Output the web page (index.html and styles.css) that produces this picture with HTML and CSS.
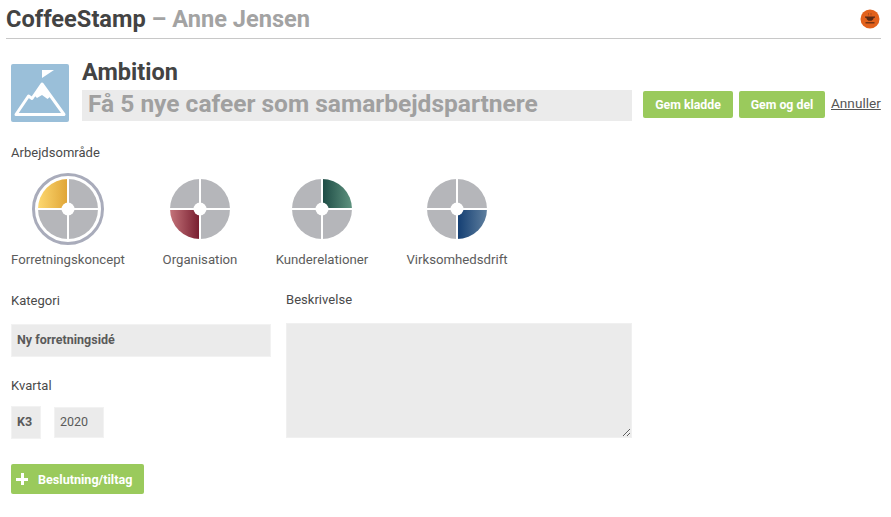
FILE: index.html
```html
<!DOCTYPE html>
<html lang="en">
<head>
  <meta charset="UTF-8" />
  <title>CoffeeStamp</title>
  <link rel="stylesheet" href="styles.css">
</head>
<body>
  <header class="topbar">
    <h1 class="brand">CoffeeStamp <span class="brand-user">– Anne Jensen</span></h1>
    <svg class="coffee-badge" width="20" height="20" viewBox="0 0 20 20">
      <circle cx="10" cy="10" r="9.5" fill="#e2611c"/>
      <path d="M8.500 4v2.500M11 4v2.500" stroke="#a04a1e" stroke-width="0.8" fill="none"/>
      <path d="M5 7.500h10v1.200h-1.200a4 4 0 0 1-2.300 3h-3a4 4 0 0 1-2.300-3H5z" fill="#5a2a16"/>
      <path d="M5.500 13.200h9v1.200h-9z" fill="#5a2a16"/>
    </svg>
  </header>

  <main class="container">
    <section class="goal">
      <svg class="goal-icon" width="58" height="58" viewBox="0 0 58 58">
        <rect width="58" height="58" rx="2" fill="#9abfd9"/>
        <path d="M31 6h12l-12 8z" fill="#fff"/>
        <path d="M5 50.500 17.500 32l3.500 2.500L31 20l22 30.500z" fill="none" stroke="#fff" stroke-width="3" stroke-linejoin="round"/>
        <path d="M31 19l-8 12 3 3 5-3 5.500 4 3.500-3z" fill="#fff"/>
      </svg>
      <div class="goal-body">
        <h2 class="goal-type">Ambition</h2>
        <div class="goal-row">
          <div class="goal-title">Få 5 nye cafeer som samarbejdspartnere</div>
          <button class="btn btn-save">Gem kladde</button>
          <button class="btn btn-share">Gem og del</button>
          <a class="cancel" href="#">Annuller</a>
        </div>
      </div>
    </section>

    <div class="field-label area-label">Arbejdsområde</div>
    <div class="areas">
      <div class="area">
        <svg class="wheel" width="72" height="72" viewBox="0 0 72 72">
          <defs><linearGradient id="yellow"><stop offset="0" stop-color="#fdd870"/><stop offset="1" stop-color="#dfa436"/></linearGradient></defs>
          <circle cx="36" cy="36" r="34.500" fill="none" stroke="#a9acbb" stroke-width="3"/>
          <path class="quarter" d="M36 36V6A30 30 0 0 1 66 36z"/>
          <path class="quarter" d="M36 36H66A30 30 0 0 1 36 66z"/>
          <path class="quarter" d="M36 36V66A30 30 0 0 1 6 36z"/>
          <path d="M36 36H6A30 30 0 0 1 36 6z" fill="url(#yellow)"/>
          <path class="cross" d="M36 5V67M5 36H67"/>
          <circle cx="36" cy="36" r="6.500" fill="#fff"/>
        </svg>
        <span class="area-name">Forretningskoncept</span>
      </div>
      <div class="area">
        <svg class="wheel" width="72" height="72" viewBox="0 0 72 72">
          <defs><linearGradient id="red"><stop offset="0" stop-color="#c4747a"/><stop offset="1" stop-color="#761c2e"/></linearGradient></defs>
          <path class="quarter" d="M36 36V6A30 30 0 0 1 66 36z"/>
          <path class="quarter" d="M36 36H66A30 30 0 0 1 36 66z"/>
          <path class="quarter" d="M36 36H6A30 30 0 0 1 36 6z"/>
          <path d="M36 36V66A30 30 0 0 1 6 36z" fill="url(#red)"/>
          <path class="cross" d="M36 5V67M5 36H67"/>
          <circle cx="36" cy="36" r="6.500" fill="#fff"/>
        </svg>
        <span class="area-name">Organisation</span>
      </div>
      <div class="area">
        <svg class="wheel" width="72" height="72" viewBox="0 0 72 72">
          <defs><linearGradient id="green"><stop offset="0" stop-color="#1c4a44"/><stop offset="1" stop-color="#5f937f"/></linearGradient></defs>
          <path class="quarter" d="M36 36H66A30 30 0 0 1 36 66z"/>
          <path class="quarter" d="M36 36V66A30 30 0 0 1 6 36z"/>
          <path class="quarter" d="M36 36H6A30 30 0 0 1 36 6z"/>
          <path d="M36 36V6A30 30 0 0 1 66 36z" fill="url(#green)"/>
          <path class="cross" d="M36 5V67M5 36H67"/>
          <circle cx="36" cy="36" r="6.500" fill="#fff"/>
        </svg>
        <span class="area-name">Kunderelationer</span>
      </div>
      <div class="area">
        <svg class="wheel" width="72" height="72" viewBox="0 0 72 72">
          <defs><linearGradient id="blue"><stop offset="0" stop-color="#123d72"/><stop offset="1" stop-color="#5f7f9e"/></linearGradient></defs>
          <path class="quarter" d="M36 36V6A30 30 0 0 1 66 36z"/>
          <path class="quarter" d="M36 36V66A30 30 0 0 1 6 36z"/>
          <path class="quarter" d="M36 36H6A30 30 0 0 1 36 6z"/>
          <path d="M36 36H66A30 30 0 0 1 36 66z" fill="url(#blue)"/>
          <path class="cross" d="M36 5V67M5 36H67"/>
          <circle cx="36" cy="36" r="6.500" fill="#fff"/>
        </svg>
        <span class="area-name">Virksomhedsdrift</span>
      </div>
    </div>

    <div class="details">
      <div class="details-left">
        <div class="field-label">Kategori</div>
        <div class="field field-category">Ny forretningsidé</div>
        <div class="field-label quarter-label">Kvartal</div>
        <div class="quarter-row">
          <div class="field field-quarter">K3</div>
          <div class="field field-year">2020</div>
        </div>
      </div>
      <div class="details-right">
        <div class="field-label">Beskrivelse</div>
        <textarea class="description"></textarea>
      </div>
    </div>

    <button class="btn btn-add"><span class="plus"></span>Beslutning/tiltag</button>
  </main>
</body>
</html>
```

FILE: styles.css
```css
* { box-sizing: border-box; }
body {
  margin: 0;
  font-family: Roboto, 'Liberation Sans', sans-serif;
  background-color: #fff;
  color: #4a4a4a;
}

.topbar {
  display: flex;
  justify-content: space-between;
  align-items: center;
  height: 39px;
  margin: 0 10px 0 6px;
  padding-right: 1px;
  border-bottom: 1px solid #c8c8c8;
}

.brand {
  margin: 0;
  font-size: 23.6px;
  font-weight: 700;
  line-height: 42px;
  color: #434343;
}

.brand-user { color: #a3a3a3; }

.container { padding: 21px 10px 0 11px; }

.goal {
  display: flex;
  gap: 13px;
}

.goal-icon { margin-top: 4px; flex: none; }

.goal-body { flex: 1; }

.goal-type {
  margin: 0 0 6px;
  font-size: 23.5px;
  font-weight: 700;
  line-height: 24px;
  color: #434343;
}

.goal-row {
  display: flex;
  align-items: flex-start;
}

.goal-title {
  width: 550px;
  height: 31px;
  padding-left: 6px;
  background: #ebebeb;
  font-size: 24.5px;
  font-weight: 700;
  line-height: 28px;
  color: #a0a0a0;
  white-space: nowrap;
  overflow: hidden;
}

.btn {
  border: none;
  border-radius: 2px;
  background: #9aca5c;
  color: #fff;
  font-family: inherit;
  font-size: 12.3px;
  font-weight: 700;
  cursor: pointer;
}

.btn-save, .btn-share { height: 27px; margin-top: 1px; }
.btn-save { width: 90px; margin-left: 11px; }
.btn-share { width: 86px; margin-left: 6px; }

.cancel {
  margin: 5px 0 0 6px;
  font-size: 13.6px;
  line-height: 16px;
  color: #555;
}

.field-label {
  font-size: 13px;
  line-height: 18px;
  letter-spacing: 0.03px;
  color: #4a4a4a;
}

.area-label { margin-top: 22px; }

.areas {
  display: grid;
  grid-template-columns: 114px 74px 94px 100px;
  column-gap: 38px;
  margin-top: 11px;
}

.area {
  display: flex;
  flex-direction: column;
  align-items: center;
  gap: 6px;
}

.wheel { display: block; }
.quarter { fill: #b5b6ba; }
.cross { stroke: #fff; stroke-width: 2; fill: none; }

.area-name {
  font-size: 13.2px;
  line-height: 18px;
  color: #5c5c5c;
  white-space: nowrap;
}

.details {
  display: grid;
  grid-template-columns: 260px 346px;
  column-gap: 15px;
  margin-top: 22px;
}

.details-left { padding-top: 1px; }

.field {
  background: #ebebeb;
  border: 1px solid #f2f2f2;
  font-size: 12.5px;
  color: #5a5a5a;
}

.field-category {
  height: 33px;
  margin-top: 14px;
  padding-left: 5px;
  font-weight: 700;
  line-height: 30px;
}

.quarter-label { margin-top: 20px; }

.quarter-row {
  display: flex;
  align-items: center;
  gap: 13px;
  margin-top: 11px;
}

.field-quarter {
  width: 30px;
  height: 33px;
  padding-left: 5px;
  font-weight: 700;
  line-height: 30px;
}

.field-year {
  width: 50px;
  height: 31px;
  padding-left: 5px;
  line-height: 27px;
}

.description {
  display: block;
  width: 346px;
  height: 115px;
  margin-top: 14px;
  background: #ebebeb;
  border: 1px solid #f0f0f0;
  border-radius: 0;
}

.btn-add {
  display: flex;
  align-items: center;
  width: 133px;
  height: 30px;
  margin-top: 25px;
  padding-left: 5px;
  font-size: 12.6px;
}

.plus {
  width: 12px;
  height: 12px;
  margin-right: 10px;
  background:
    linear-gradient(#fff, #fff) center / 12px 3px no-repeat,
    linear-gradient(#fff, #fff) center / 3px 12px no-repeat;
}
```
